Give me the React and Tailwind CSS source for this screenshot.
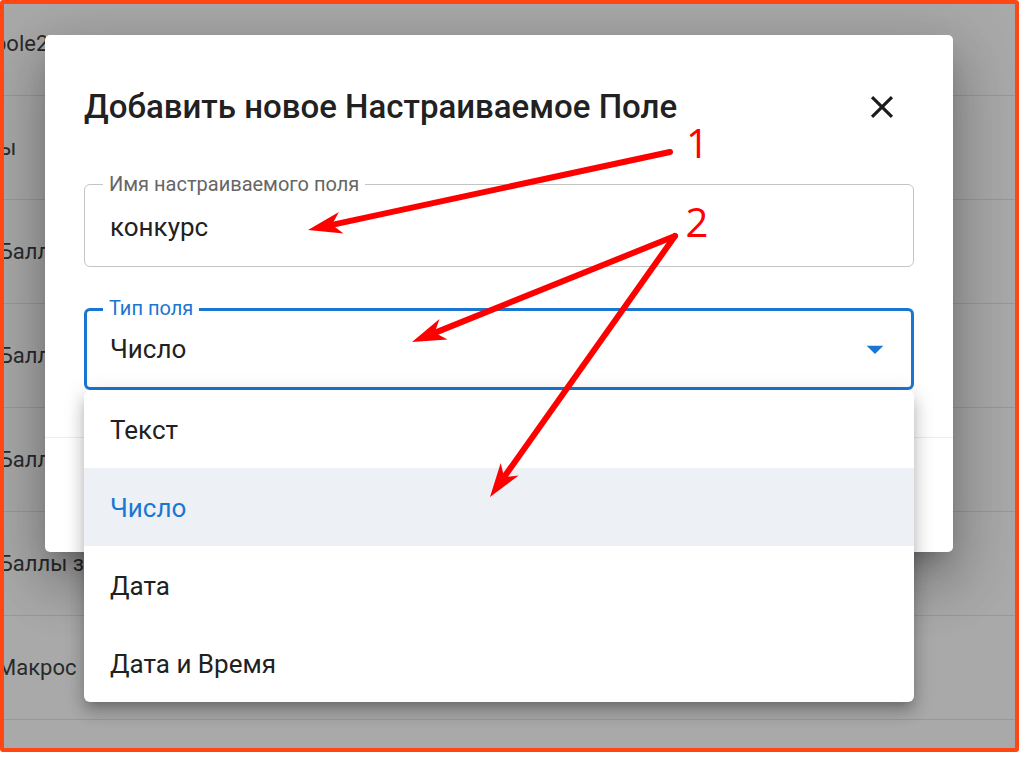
import React from "react";

function arrow(x1, y1, x2, y2, L = 34, W = 11, notch = 0.72) {
  const dx = x2 - x1, dy = y2 - y1, len = Math.hypot(dx, dy);
  const ux = dx / len, uy = dy / len, px = -uy, py = ux;
  const bx = x2 - L * ux, by = y2 - L * uy;
  const nx = x2 - notch * L * ux, ny = y2 - notch * L * uy;
  return {
    points: `${x2},${y2} ${bx + W * px},${by + W * py} ${nx},${ny} ${bx - W * px},${by - W * py}`,
    ex: nx,
    ey: ny,
  };
}

function Arrow({ x1, y1, x2, y2 }) {
  const a = arrow(x1, y1, x2, y2);
  return (
    <g>
      <line x1={x1} y1={y1} x2={a.ex} y2={a.ey} stroke="#ff0000" strokeWidth="6" strokeLinecap="round" />
      <polygon points={a.points} fill="#ff0000" />
    </g>
  );
}

const rows = [
  { text: "pole2", cls: "-ml-[10px]" },
  { text: "Баллы", cls: "-ml-[56px]" },
  { text: "Баллы за тест", cls: "-ml-[5px]" },
  { text: "Баллы за урок", cls: "-ml-[5px]" },
  { text: "Баллы за задание", cls: "-ml-[5px]" },
  { text: "Баллы за конкурс", cls: "-ml-[5px]" },
  { text: "Макрос", cls: "-ml-[7px]" },
  { text: "", cls: "" },
];

export default function App() {
  return (
    <div className="w-[1024px] h-[757px] bg-white relative overflow-hidden font-['Roboto',sans-serif]">
      <div className="w-[1019px] h-[752px] border-4 border-[#ff4713] rounded-[3px] bg-[#a9a9a9] relative overflow-hidden">
        {/* background table */}
        <div className="-mt-[12px] flex flex-col">
          {rows.map((r, i) => (
            <div key={i} className="h-[104px] shrink-0 border-b border-[#989898] flex items-center">
              <span className={`text-[22px] text-[#2a2a2a] whitespace-nowrap ${r.cls}`}>{r.text}</span>
            </div>
          ))}
        </div>

        {/* dialog */}
        <div className="absolute left-[41px] top-[31px] w-[908px] h-[517px] bg-white rounded-[5px] flex flex-col shadow-[0_15px_22px_-10px_rgba(0,0,0,0.25),0_34px_54px_4px_rgba(0,0,0,0.16),0_13px_64px_12px_rgba(0,0,0,0.14)]">
          <div className="mt-[50px] h-[44px] flex items-center justify-between pl-[39px] pr-[52px]">
            <h2 className="text-[33px] leading-[44px] font-medium text-[#212121]">
              Добавить новое Настраиваемое Поле
            </h2>
            <svg viewBox="0 0 24 24" className="w-[38px] h-[38px]" fill="#1c1c1c">
              <path d="M19 6.41 17.59 5 12 10.59 6.41 5 5 6.41 10.59 12 5 17.59 6.41 19 12 13.41 17.59 19 19 17.59 13.41 12z" />
            </svg>
          </div>

          <div className="mt-[55px] px-[39px] flex flex-col gap-[41px]">
            <div className="relative h-[83px] border border-[#c4c4c4] rounded-[6px] flex items-center pl-[25px] pt-[3px]">
              <span className="absolute left-[18px] -top-[12px] bg-white px-[6px] text-[20px] leading-[22px] text-[#666666]">
                Имя настраиваемого поля
              </span>
              <span className="text-[26px] text-[#212121]">конкурс</span>
            </div>

            <div className="relative h-[82px] border-[3px] border-[#1976d2] rounded-[6px] flex items-center pl-[23px] pt-[1px]">
              <span className="absolute left-[16px] -top-[14px] bg-white px-[6px] text-[20px] leading-[22px] text-[#1976d2]">
                Тип поля
              </span>
              <span className="text-[26px] text-[#212121] flex-1">Число</span>
              <svg viewBox="0 0 24 24" className="w-[40px] h-[40px] mr-[16px] -mt-[2px]" fill="#1976d2">
                <path d="M7 10l5 5 5-5z" />
              </svg>

              {/* dropdown menu */}
              <div className="absolute left-[-3px] right-[-3px] top-[calc(100%+3px)] bg-white rounded-[6px] flex flex-col shadow-[0_7px_10px_-5px_rgba(0,0,0,0.2),0_11px_15px_1px_rgba(0,0,0,0.14),0_4px_20px_3px_rgba(0,0,0,0.12)]">
                <div className="h-[78px] flex items-center pl-[26px] pt-[3px] text-[26px] text-[#212121]">Текст</div>
                <div className="h-[78px] flex items-center pl-[26px] pt-[3px] text-[26px] text-[#1976d2] bg-[#edf0f5]">Число</div>
                <div className="h-[78px] flex items-center pl-[26px] pt-[3px] text-[26px] text-[#212121]">Дата</div>
                <div className="h-[78px] flex items-center pl-[26px] pt-[3px] text-[26px] text-[#212121]">Дата и Время</div>
              </div>
            </div>
          </div>

          <div className="mt-[47px] border-t border-[#ececec] flex-1" />
        </div>
      </div>

      {/* annotations */}
      <svg className="absolute left-0 top-0 z-20 pointer-events-none" width="1024" height="757" viewBox="0 0 1024 757">
        <Arrow x1={670} y1={152} x2={308} y2={230} />
        <Arrow x1={675} y1={236} x2={412} y2={342} />
        <Arrow x1={675} y1={236} x2={490} y2={497} />
        <text x="697.5" y="158" textAnchor="middle" fontSize="40" fill="#ff0000" fontFamily="'Open Sans', sans-serif">1</text>
        <text x="697" y="237" textAnchor="middle" fontSize="40" fill="#ff0000" fontFamily="'Open Sans', sans-serif">2</text>
      </svg>
    </div>
  );
}
